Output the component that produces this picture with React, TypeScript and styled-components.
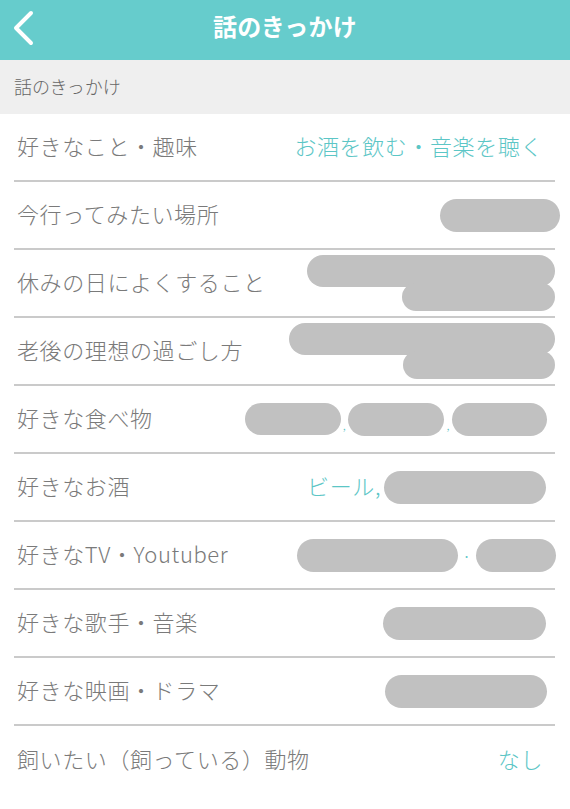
import React from "react";
import styled, { createGlobalStyle } from "styled-components";

const Global = createGlobalStyle`
  html, body { margin: 0; padding: 0; background: #ffffff; }
  body { font-family: "Noto Sans CJK JP", "Noto Sans", sans-serif; }
`;

const Page = styled.div`
  width: 570px;
  min-height: 809px;
  background: #ffffff;
`;

const Header = styled.header`
  height: 60px;
  background: #66cccc;
  display: flex;
  align-items: center;
  justify-content: center;
  position: relative;
`;

const Back = styled.button`
  position: absolute;
  left: 8px;
  top: 6px;
  width: 30px;
  height: 44px;
  padding: 0;
  border: 0;
  background: transparent;
  display: flex;
  align-items: center;
  justify-content: center;
`;

const Title = styled.h1`
  margin: 0;
  color: #ffffff;
  font-size: 24px;
  font-weight: 700;
  letter-spacing: 0.3px;
  margin-top: -9px;
`;

const Section = styled.div`
  height: 54px;
  background: #efefef;
  display: flex;
  align-items: center;
  padding: 0 0 3px 14px;
  color: #666666;
  font-size: 18px;
  font-weight: 300;
  box-sizing: border-box;
`;

const List = styled.div`
  padding: 0 15px 0 14px;
`;

const Row = styled.div<{ $last?: boolean }>`
  height: 68px;
  box-sizing: border-box;
  display: flex;
  align-items: center;
  justify-content: space-between;
  padding: 0 12px 0 3px;
  border-bottom: ${(p) => (p.$last ? "none" : "2px solid #cacaca")};
`;

const Label = styled.span`
  color: #7a7a7a;
  font-size: 22px;
  font-weight: 300;
  letter-spacing: 0.6px;
  white-space: nowrap;
  padding-bottom: 5px;
`;

const Value = styled.div`
  display: flex;
  align-items: center;
  color: #5cc6c6;
  font-size: 22px;
  font-weight: 300;
  letter-spacing: 0.6px;
  white-space: nowrap;
`;

const ValueText = styled.span`
  padding-bottom: 5px;
`;

const Pill = styled.span<{ $w: number; $h?: number; $mr?: number; $ml?: number }>`
  display: inline-block;
  width: ${(p) => p.$w}px;
  height: ${(p) => p.$h ?? 33}px;
  border-radius: 17px;
  background: #c1c1c1;
  margin-right: ${(p) => p.$mr ?? 0}px;
  margin-left: ${(p) => p.$ml ?? 0}px;
`;

const Stack = styled.div`
  display: flex;
  flex-direction: column;
  align-items: flex-end;
  margin-right: -12px;
  & > span + span {
    margin-top: -4px;
  }
`;

const Sep = styled.span`
  color: #5cc6c6;
  font-size: 12px;
  margin: 0 2px;
  align-self: flex-end;
  line-height: 22px;
`;

const Dot = styled.span`
  color: #5cc6c6;
  font-size: 18px;
  margin: 0 4px;
`;

export default function App() {
  return (
    <Page>
      <Global />
      <Header>
        <Back aria-label="back">
          <svg width="24" height="36" viewBox="0 0 24 36">
            <polyline
              points="20,3 5,18 20,33"
              fill="none"
              stroke="#ffffff"
              strokeWidth="4"
              strokeLinecap="round"
              strokeLinejoin="round"
            />
          </svg>
        </Back>
        <Title>話のきっかけ</Title>
      </Header>
      <Section>話のきっかけ</Section>
      <List>
        <Row>
          <Label>好きなこと・趣味</Label>
          <Value>
            <ValueText>お酒を飲む・音楽を聴く</ValueText>
          </Value>
        </Row>
        <Row>
          <Label>今行ってみたい場所</Label>
          <Value>
            <Pill $w={120} $mr={-17} />
          </Value>
        </Row>
        <Row>
          <Label>休みの日によくすること</Label>
          <Value>
            <Stack>
              <Pill $w={248} $h={32} />
              <Pill $w={153} $h={28} />
            </Stack>
          </Value>
        </Row>
        <Row>
          <Label>老後の理想の過ごし方</Label>
          <Value>
            <Stack>
              <Pill $w={266} $h={32} />
              <Pill $w={152} $h={28} />
            </Stack>
          </Value>
        </Row>
        <Row>
          <Label>好きな食べ物</Label>
          <Value>
            <Pill $w={96} $h={32} />
            <Sep>,</Sep>
            <Pill $w={96} />
            <Sep>,</Sep>
            <Pill $w={95} $mr={-4} />
          </Value>
        </Row>
        <Row>
          <Label>好きなお酒</Label>
          <Value>
            <ValueText>ビール,</ValueText>
            <Pill $w={162} $mr={-3} $ml={3} />
          </Value>
        </Row>
        <Row>
          <Label>好きなTV・Youtuber</Label>
          <Value>
            <Pill $w={161} />
            <Dot>·</Dot>
            <Pill $w={80} $mr={-13} />
          </Value>
        </Row>
        <Row>
          <Label>好きな歌手・音楽</Label>
          <Value>
            <Pill $w={163} $mr={-3} />
          </Value>
        </Row>
        <Row>
          <Label>好きな映画・ドラマ</Label>
          <Value>
            <Pill $w={162} $mr={-4} />
          </Value>
        </Row>
        <Row $last>
          <Label>飼いたい（飼っている）動物</Label>
          <Value>
            <ValueText>なし</ValueText>
          </Value>
        </Row>
      </List>
    </Page>
  );
}
